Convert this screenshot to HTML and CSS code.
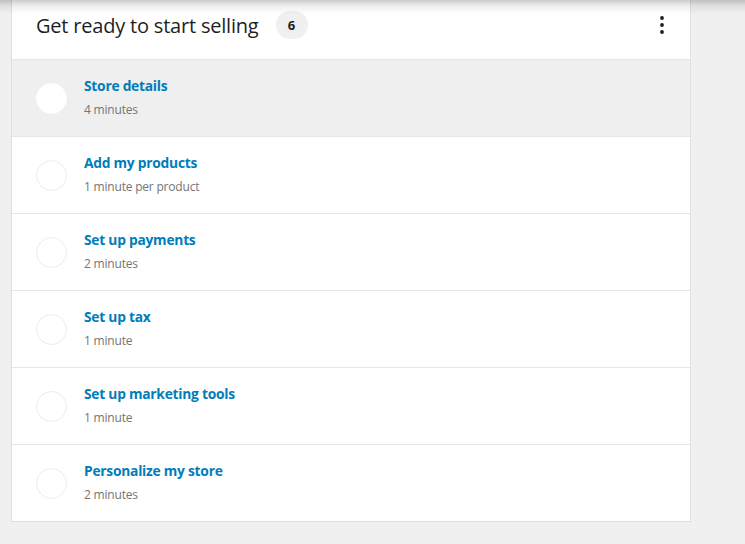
FILE: index.html
```html
<!DOCTYPE html>
<html>
<head>
<meta charset="utf-8">
<link rel="stylesheet" href="styles.css">
</head>
<body>
<div class="top-shadow"></div>
<div class="card">
  <div class="card-header">
    <h2 class="card-title">Get ready to start selling</h2>
    <span class="badge">6</span>
    <button class="kebab" aria-label="Task list options">
      <svg width="4" height="18" viewBox="0 0 4 18"><circle cx="2" cy="2" r="1.9"/><circle cx="2" cy="9" r="1.9"/><circle cx="2" cy="16" r="1.9"/></svg>
    </button>
  </div>
  <ul class="tasks">
    <li class="task is-active">
      <span class="task-circle"></span>
      <div class="task-text"><div class="task-title">Store details</div><div class="task-time">4 minutes</div></div>
    </li>
    <li class="task">
      <span class="task-circle"></span>
      <div class="task-text"><div class="task-title">Add my products</div><div class="task-time">1 minute per product</div></div>
    </li>
    <li class="task">
      <span class="task-circle"></span>
      <div class="task-text"><div class="task-title">Set up payments</div><div class="task-time">2 minutes</div></div>
    </li>
    <li class="task">
      <span class="task-circle"></span>
      <div class="task-text"><div class="task-title">Set up tax</div><div class="task-time">1 minute</div></div>
    </li>
    <li class="task">
      <span class="task-circle"></span>
      <div class="task-text"><div class="task-title">Set up marketing tools</div><div class="task-time">1 minute</div></div>
    </li>
    <li class="task">
      <span class="task-circle"></span>
      <div class="task-text"><div class="task-title">Personalize my store</div><div class="task-time">2 minutes</div></div>
    </li>
  </ul>
</div>
</body>
</html>
```
FILE: styles.css
```css
html, body {
  margin: 0;
  padding: 0;
  background: #f0f0f0;
  font-family: "Open Sans", Lato, sans-serif;
  overflow: hidden;
}
.top-shadow {
  position: fixed;
  top: 0;
  left: 0;
  right: 0;
  height: 14px;
  background: linear-gradient(to bottom, rgba(0,0,0,0.2), rgba(0,0,0,0.06) 45%, rgba(0,0,0,0));
  z-index: 10;
  pointer-events: none;
}
.card {
  margin: -9px 0 0 11px;
  width: 678px;
  background: #fff;
  border: 1px solid #e0e0e0;
  border-top: none;
}
.card-header {
  height: 68px;
  display: flex;
  align-items: center;
  padding: 0 24px;
  border-bottom: 1px solid #e6e6e6;
}
.card-title {
  margin: 0;
  font-size: 20px;
  font-weight: 400;
  letter-spacing: -0.2px;
  color: #1e1e1e;
}
.badge {
  margin-left: 17px;
  width: 32px;
  height: 28px;
  border-radius: 14px;
  background: #f0f0f0;
  color: #1e1e1e;
  font-size: 13px;
  font-weight: 700;
  display: flex;
  align-items: center;
  justify-content: center;
}
.kebab {
  margin-left: auto;
  margin-right: 2px;
  background: none;
  border: none;
  padding: 0;
  display: flex;
  fill: #1e1e1e;
}
.tasks {
  list-style: none;
  margin: 0;
  padding: 0;
}
.task {
  height: 76px;
  display: flex;
  align-items: center;
  padding-left: 24px;
  border-bottom: 1px solid #e6e6e6;
}
.task:last-child {
  border-bottom: none;
}
.task.is-active {
  background: #efefef;
}
.task-circle {
  width: 31px;
  height: 31px;
  box-sizing: border-box;
  border-radius: 50%;
  border: 1px solid #ececec;
  background: #fff;
  flex: none;
}
.is-active .task-circle {
  border-color: #fff;
}
.task-text {
  margin-left: 17px;
  margin-top: -2px;
}
.task-title {
  font-size: 13.8px;
  font-weight: 700;
  letter-spacing: -0.25px;
  color: #007cba;
  line-height: 18px;
}
.task-time {
  margin-top: 7px;
  font-size: 12px;
  letter-spacing: -0.2px;
  color: #757575;
  line-height: 16px;
}
```
